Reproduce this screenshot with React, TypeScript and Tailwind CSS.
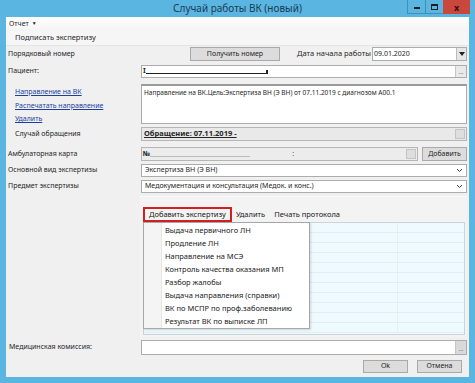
import React from 'react';

const font = "font-['Noto_Sans','Open_Sans',sans-serif]";

function DotsButton({ dark }: { dark?: boolean }) {
  return (
    <div className={`w-[11px] shrink-0 self-stretch border-l border-[#c8c8c8] flex items-end justify-center pb-[2px] ${dark ? 'bg-[#d9d9d9]' : 'bg-[#e9e9e9]'}`}>
      <span className="text-[6px] leading-none text-[#555]">...</span>
    </div>
  );
}

function Chevron() {
  return (
    <svg width="7" height="5" viewBox="0 0 7 5" className="mr-[3px] shrink-0">
      <path d="M1 1 L3.5 3.5 L6 1" fill="none" stroke="#444" strokeWidth="1" />
    </svg>
  );
}

function Select({ text }: { text: string }) {
  return (
    <div className="flex-1 h-full mr-[2px] bg-white border border-[#acacac] flex items-center pl-[3px]">
      <span className="flex-1 truncate">{text}</span>
      <Chevron />
    </div>
  );
}

const menuItems = [
  'Выдача первичного ЛН',
  'Продление ЛН',
  'Направление на МСЭ',
  'Контроль качества оказания МП',
  'Разбор жалобы',
  'Выдача направления (справки)',
  'ВК по МСПР по проф.заболеванию',
  'Результат ВК по выписке ЛП',
];

export default function App() {
  return (
    <div className={`w-[475px] h-[383px] bg-[#5ab6e1] flex flex-col text-[7px] text-[#262626] ${font}`}>
      {/* title bar */}
      <div className="h-[17px] shrink-0 grid grid-cols-[1fr_auto_1fr] items-start">
        <div />
        <div className="pt-[2px] text-[10px] leading-[13px] text-[#1b3a55]">Случай работы ВК (новый)</div>
        <div className="flex justify-end pr-[5px]">
          <div className="w-[19px] h-[14px] border border-[#3f8fb8] border-t-0 flex items-center justify-center">
            <div className="w-[6px] h-[2px] bg-[#1e1e1e] mt-[3px]" />
          </div>
          <div className="w-[17px] h-[14px] border-b border-[#3f8fb8] flex items-center justify-center">
            <div className="w-[7px] h-[6px] border-[1.5px] border-t-[2px] border-[#1e1e1e]" />
          </div>
          <div className="w-[27px] h-[14px] bg-[#c9473d] flex items-center justify-center text-[9px] font-bold leading-none text-[#2a1010]">
            x
          </div>
        </div>
      </div>

      {/* client area */}
      <div className="flex-1 mx-[6px] mb-[6px] bg-[#f0f0f0] flex flex-col">
        <div className="h-[14px] shrink-0 flex items-center pl-[3px] bg-gradient-to-b from-white to-[#f4f4f4]">
          <span>Отчет</span>
          <span className="ml-[3px] text-[5px]">▼</span>
        </div>
        <div className="h-[15px] shrink-0 flex items-center pl-[9px] bg-[#f6f6f6] border-b border-[#e4e4e4] text-[7.5px]">
          Подписать экспертизу
        </div>

        {/* row 1 */}
        <div className="mt-[1px] h-[14px] shrink-0 flex items-center">
          <div className="w-[184px] shrink-0 pl-[2px]">Порядковый номер</div>
          <div className="w-[90px] h-full bg-[#dcdcdc] border border-[#a9a9a9] flex items-center justify-center">
            Получить номер
          </div>
          <div className="ml-[17px] w-[75px] shrink-0 text-[7.5px]">Дата начала работы</div>
          <div className="flex-1 h-full mr-[2px] bg-white border border-[#acacac] flex items-center">
            <span className="flex-1 pl-[1px]">09.01.2020</span>
            <div className="w-[10px] h-full bg-[#e6e6e6] border-l border-[#bbb] flex items-center justify-center">
              <svg width="6" height="4" viewBox="0 0 6 4"><path d="M0 0 H6 L3 4 Z" fill="#222" /></svg>
            </div>
          </div>
        </div>

        {/* row 2 */}
        <div className="mt-[4px] h-[13px] shrink-0 flex items-center">
          <div className="w-[135px] shrink-0 pl-[2px]">Пациент:</div>
          <div className="flex-1 h-full mr-[2px] bg-white border border-[#acacac] flex items-center">
            <div className="flex-1 flex items-center pl-[1px]">
              <span className="font-bold">I</span>
              <div className="w-[120px] h-[5px] border-b border-[#222]" />
              <div className="w-[2px] h-[4px] bg-[#222] mt-[1px]" />
            </div>
            <DotsButton />
          </div>
        </div>

        {/* row 3 */}
        <div className="mt-[6px] h-[40px] shrink-0 flex">
          <div className="w-[135px] shrink-0 pl-[9px] pt-[1px] flex flex-col text-[#1c3f9e] underline leading-[13.5px]">
            <span>Направление на ВК</span>
            <span>Распечатать направление</span>
            <span>Удалить</span>
          </div>
          <div className="flex-1 mr-[2px] bg-white border border-[#acacac] border-t-[2px] border-t-[#9a9a9a] px-[2px] pt-[2px] leading-[9px] text-[6.5px]">
            Направление на ВК.Цель:Экспертиза ВН (Э ВН) от 07.11.2019 с диагнозом A00.1
          </div>
        </div>

        {/* row 4 */}
        <div className="mt-[3px] h-[14px] shrink-0 flex items-center">
          <div className="w-[135px] shrink-0 pl-[9px]">Случай обращения</div>
          <div className="flex-1 h-full mr-[2px] bg-[#e9e9e9] border border-[#b5b5b5] flex items-center">
            <span className="flex-1 pl-[2px] font-bold underline text-[7.5px]">Обращение: 07.11.2019 -</span>
            <div className="w-[10px] h-[10px] mr-[1px] bg-[#dedede] border border-[#c4c4c4]" />
          </div>
        </div>

        {/* row 5 */}
        <div className="mt-[6px] h-[14px] shrink-0 flex items-center">
          <div className="w-[135px] shrink-0 pl-[2px]">Амбулаторная карта</div>
          <div className="flex-1 h-full bg-[#ececec] border border-[#b5b5b5] flex items-center">
            <div className="flex-1 flex items-center pl-[1px]">
              <span className="font-bold">№</span>
              <div className="w-[100px] h-[5px] border-b border-[#bbb]" />
              <span className="ml-[42px] text-[#555]">:</span>
            </div>
            <div className="w-[10px] h-[10px] mr-[1px] bg-[#dedede] border border-[#c4c4c4]" />
          </div>
          <div className="ml-[4px] mr-[2px] w-[45px] h-full bg-[#dcdcdc] border border-[#a9a9a9] flex items-center justify-center">
            Добавить
          </div>
        </div>

        {/* row 6 */}
        <div className="mt-[3px] h-[13px] shrink-0 flex items-center">
          <div className="w-[135px] shrink-0 pl-[2px]">Основной вид экспертизы</div>
          <Select text="Экспертиза ВН (Э ВН)" />
        </div>

        {/* row 7 */}
        <div className="mt-[3px] h-[13px] shrink-0 flex items-center">
          <div className="w-[135px] shrink-0 pl-[2px]">Предмет экспертизы</div>
          <Select text="Медокументация и консультация (Медок. и конс.)" />
        </div>

        {/* group */}
        <div className="mt-[3px] h-[141px] shrink-0 ml-[134px] mr-[2px] relative flex flex-col bg-[#f3f3f3] border-t border-[#f9f9f9]">
          <div className="mt-[10px] h-[15px] shrink-0 flex items-center pl-[3px] text-[7.5px] text-[#1a1a1a]">
            <div className="h-full px-[4px] border-[2px] border-[#d21f1f] flex items-center">Добавить экспертизу</div>
            <span className="ml-[4px]">Удалить</span>
            <span className="ml-[9px]">Печать протокола</span>
          </div>
          <div className="ml-[3px] mr-[2px] h-[113px] shrink-0 bg-[#effaff] border border-[#c9d3d8] flex flex-col overflow-hidden">
            {Array.from({ length: 11 }).map((_, i) => (
              <div key={i} className="h-[10px] shrink-0 border-b border-[#dfeef4] flex">
                <div className="w-[254px] border-r border-[#e3eef2]" />
              </div>
            ))}
          </div>

          {/* dropdown menu */}
          <div className="absolute left-[3px] top-[25px] w-[167px] h-[107px] bg-white border border-[#a7a7a7] shadow-[1px_1px_2px_rgba(0,0,0,0.15)] flex text-[7.5px] text-[#1a1a1a]">
            <div className="w-[18px] shrink-0 bg-[#f4f4f4] border-r border-[#e6e6e6]" />
            <div className="flex-1 flex flex-col pl-[3px] pt-[1px]">
              {menuItems.map((t) => (
                <div key={t} className="h-[13px] flex items-center whitespace-nowrap">{t}</div>
              ))}
            </div>
          </div>
        </div>

        {/* row 8 */}
        <div className="mt-[3px] h-[15px] shrink-0 flex items-center">
          <div className="w-[135px] shrink-0 pl-[3px]">Медицинская комиссия:</div>
          <div className="flex-1 h-full mr-[2px] bg-white border border-[#acacac] flex items-center">
            <div className="flex-1" />
            <DotsButton dark />
          </div>
        </div>

        {/* buttons */}
        <div className="mt-[5px] h-[13px] shrink-0 flex justify-end pr-[7px] gap-[9px]">
          <div className="w-[45px] h-full bg-[#dcdcdc] border border-[#a9a9a9] flex items-center justify-center">Ok</div>
          <div className="w-[45px] h-full bg-[#dcdcdc] border border-[#a9a9a9] flex items-center justify-center">Отмена</div>
        </div>
      </div>
    </div>
  );
}
